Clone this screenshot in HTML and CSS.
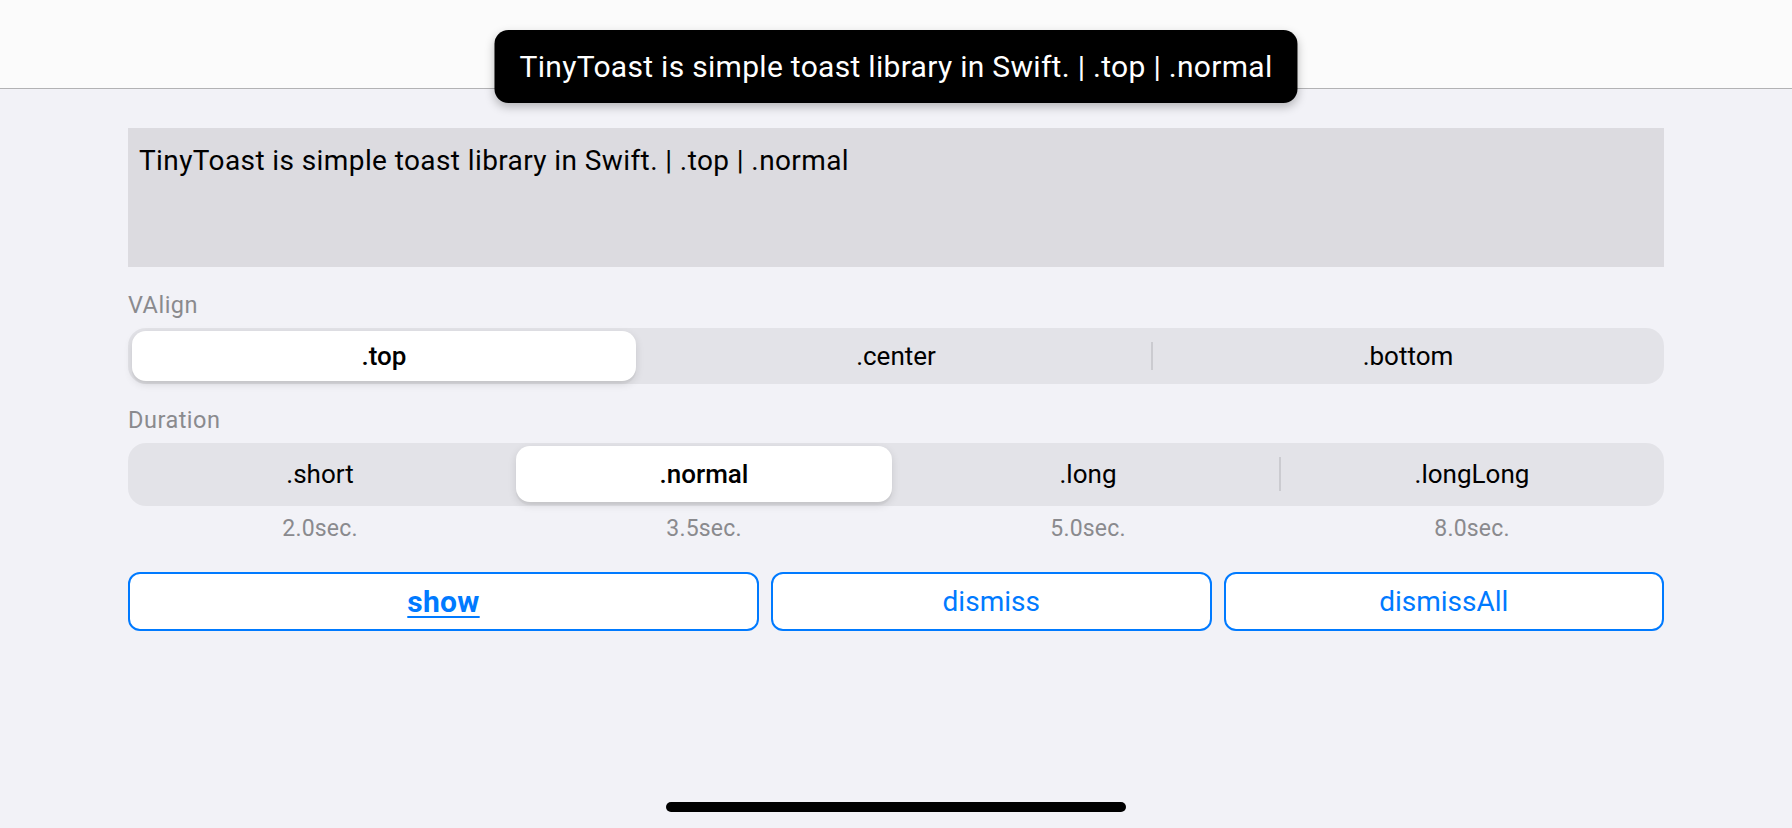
FILE: index.html
```html
<!DOCTYPE html>
<html lang="en">
<head>
<meta charset="utf-8">
<title>TinyToast</title>
<link rel="stylesheet" href="styles.css">
</head>
<body>
<header class="navbar"></header>
<main class="content">
  <div class="textview">TinyToast is simple toast library in Swift. | .top | .normal</div>
  <div class="label">VAlign</div>
  <div class="segmented seg3">
    <div class="seg selected">.top</div>
    <div class="seg">.center</div>
    <div class="seg sep">.bottom</div>
  </div>
  <div class="label label-duration">Duration</div>
  <div class="segmented seg4">
    <div class="seg">.short</div>
    <div class="seg selected">.normal</div>
    <div class="seg">.long</div>
    <div class="seg sep">.longLong</div>
  </div>
  <div class="durations">
    <span>2.0sec.</span>
    <span>3.5sec.</span>
    <span>5.0sec.</span>
    <span>8.0sec.</span>
  </div>
  <div class="buttons">
    <button class="btn btn-show">show</button>
    <button class="btn">dismiss</button>
    <button class="btn">dismissAll</button>
  </div>
</main>
<div class="toast">TinyToast is simple toast library in Swift. | .top | .normal</div>
<div class="home-indicator"></div>
</body>
</html>
```
FILE: styles.css
```css
html, body {
  margin: 0;
  padding: 0;
}
body {
  width: 1792px;
  height: 828px;
  overflow: hidden;
  position: relative;
  background: #f2f2f7;
  font-family: Roboto, "Liberation Sans", sans-serif;
  color: #000;
}
.navbar {
  height: 88px;
  background: #fbfbfb;
  border-bottom: 1px solid #b2b2b4;
}
.content {
  padding: 0 128px;
  margin-top: 39px;
  display: flex;
  flex-direction: column;
}
.textview {
  height: 139px;
  box-sizing: border-box;
  background: #dcdbe0;
  padding: 16px 10px 0 11px;
  font-size: 28px;
  line-height: 34px;
  letter-spacing: 0.4px;
}
.label {
  margin-top: 24px;
  font-size: 23.5px;
  line-height: 28px;
  letter-spacing: 0.5px;
  color: #8a8a8e;
}
.label-duration {
  margin-top: 22px;
}
.segmented {
  margin-top: 9px;
  background: #e3e3e8;
  border-radius: 18px;
  padding: 3px 4px;
  display: grid;
  column-gap: 8px;
  box-sizing: border-box;
}
.seg3 {
  grid-template-columns: repeat(3, 1fr);
  height: 56px;
}
.seg4 {
  grid-template-columns: repeat(4, 1fr);
  height: 63px;
  padding-bottom: 4px;
}
.seg {
  position: relative;
  display: flex;
  align-items: center;
  justify-content: center;
  font-size: 26px;
  border-radius: 14px;
}
.seg.selected {
  background: #fff;
  font-weight: 500;
  box-shadow: 0 3px 8px rgba(0, 0, 0, 0.12), 0 3px 1px rgba(0, 0, 0, 0.04);
}
.seg.sep::before {
  content: "";
  position: absolute;
  left: -5px;
  top: 11px;
  bottom: 11px;
  width: 2px;
  background: #cbcbd0;
}
.durations {
  margin-top: 10px;
  display: grid;
  grid-template-columns: repeat(4, 1fr);
  column-gap: 8px;
  padding: 0 4px;
  font-size: 23px;
  line-height: 26px;
  letter-spacing: 0.2px;
  color: #8a8a8e;
  text-align: center;
}
.buttons {
  margin-top: 30px;
  display: grid;
  grid-template-columns: 631px 1fr 1fr;
  column-gap: 12px;
}
.btn {
  height: 59px;
  box-sizing: border-box;
  border: 2px solid #007aff;
  border-radius: 12px;
  background: #fff;
  color: #007aff;
  font-family: Roboto, "Liberation Sans", sans-serif;
  font-size: 28px;
  padding: 0;
}
.btn-show {
  font-size: 30px;
  font-weight: 700;
  letter-spacing: 0.3px;
  text-decoration: underline;
  text-decoration-thickness: 2px;
  text-underline-offset: 4px;
}
.toast {
  position: absolute;
  top: 30px;
  left: 50%;
  transform: translateX(-50%);
  height: 73px;
  box-sizing: border-box;
  padding: 0 25px;
  display: flex;
  align-items: center;
  background: #000;
  color: #fff;
  border-radius: 14px;
  font-size: 30px;
  letter-spacing: 0.3px;
  white-space: nowrap;
  box-shadow: 0 4px 10px rgba(0, 0, 0, 0.25);
}
.home-indicator {
  position: absolute;
  left: 666px;
  top: 802px;
  width: 460px;
  height: 10px;
  border-radius: 5px;
  background: #000;
}
```
